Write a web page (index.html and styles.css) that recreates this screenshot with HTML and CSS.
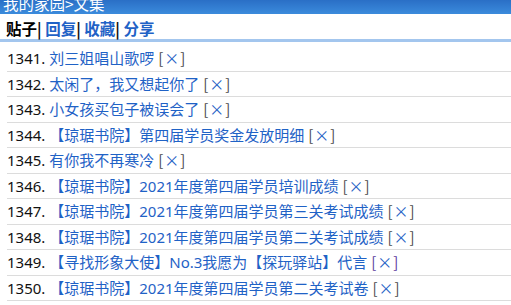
FILE: index.html
```html
<!DOCTYPE html>
<html lang="zh-CN">
<head>
    <meta charset="UTF-8">
    <title>文集</title>
    <link rel="stylesheet" href="styles.css">
</head>
<body>
    <div class="title">我的家园&gt;文集</div>
    <div class="nav">
        <span class="cur">贴子</span>| <a href="#">回复</a>| <a href="#">收藏</a>| <a href="#">分享</a>
    </div>
    <ul class="list">
        <li>1341. <a href="#">刘三姐唱山歌啰</a> <span class="del">[<a href="#">×</a>]</span></li>
        <li>1342. <a href="#">太闲了，我又想起你了</a> <span class="del">[<a href="#">×</a>]</span></li>
        <li>1343. <a href="#">小女孩买包子被误会了</a> <span class="del">[<a href="#">×</a>]</span></li>
        <li>1344. <a href="#">【琼琚书院】第四届学员奖金发放明细</a> <span class="del">[<a href="#">×</a>]</span></li>
        <li>1345. <a href="#">有你我不再寒冷</a> <span class="del">[<a href="#">×</a>]</span></li>
        <li>1346. <a href="#">【琼琚书院】2021年度第四届学员培训成绩</a> <span class="del">[<a href="#">×</a>]</span></li>
        <li>1347. <a href="#">【琼琚书院】2021年度第四届学员第三关考试成绩</a> <span class="del">[<a href="#">×</a>]</span></li>
        <li>1348. <a href="#">【琼琚书院】2021年度第四届学员第二关考试成绩</a> <span class="del">[<a href="#">×</a>]</span></li>
        <li>1349. <a href="#">【寻找形象大使】No.3我愿为【探玩驿站】代言</a> <span class="del v">[<a href="#">×</a>]</span></li>
        <li>1350. <a href="#">【琼琚书院】2021年度第四届学员第二关考试卷</a> <span class="del">[<a href="#">×</a>]</span></li>
    </ul>
</body>
</html>
```

FILE: styles.css
```css
*{
    padding:0;
    margin:0;
}
body{
    font-family:"Noto Sans","Noto Sans CJK SC",sans-serif;
    font-size:15px;
    color:#111;
    background:#fff;
}
a{
    color:#1f62c6;
    text-decoration:none;
}
.title{
    height:14px;
    line-height:6px;
    overflow:hidden;
    padding-left:3px;
    color:#fff;
    font-size:15.5px;
    font-family:"Noto Sans CJK SC",sans-serif;
    background:linear-gradient(#2a6fc6,#3b8bdc);
}
.nav{
    height:25px;
    line-height:28px;
    padding-left:6px;
    font-size:15.5px;
    font-weight:bold;
    font-family:"Noto Sans CJK SC",sans-serif;
    border-bottom:3px solid #a3c6ee;
}
.nav .cur{
    color:#000;
}
.list{
    list-style:none;
    margin:4px 0 0 7px;
}
.list li{
    height:24.5px;
    line-height:24px;
    border-bottom:1px solid #dcdcdc;
    white-space:nowrap;
}
.del{
    color:#4a4a4a;
    font-family:"Noto Sans CJK SC",sans-serif;
}
.del a{
    padding:0 1px;
}
.del.v{
    color:#5b3a9c;
}
```
